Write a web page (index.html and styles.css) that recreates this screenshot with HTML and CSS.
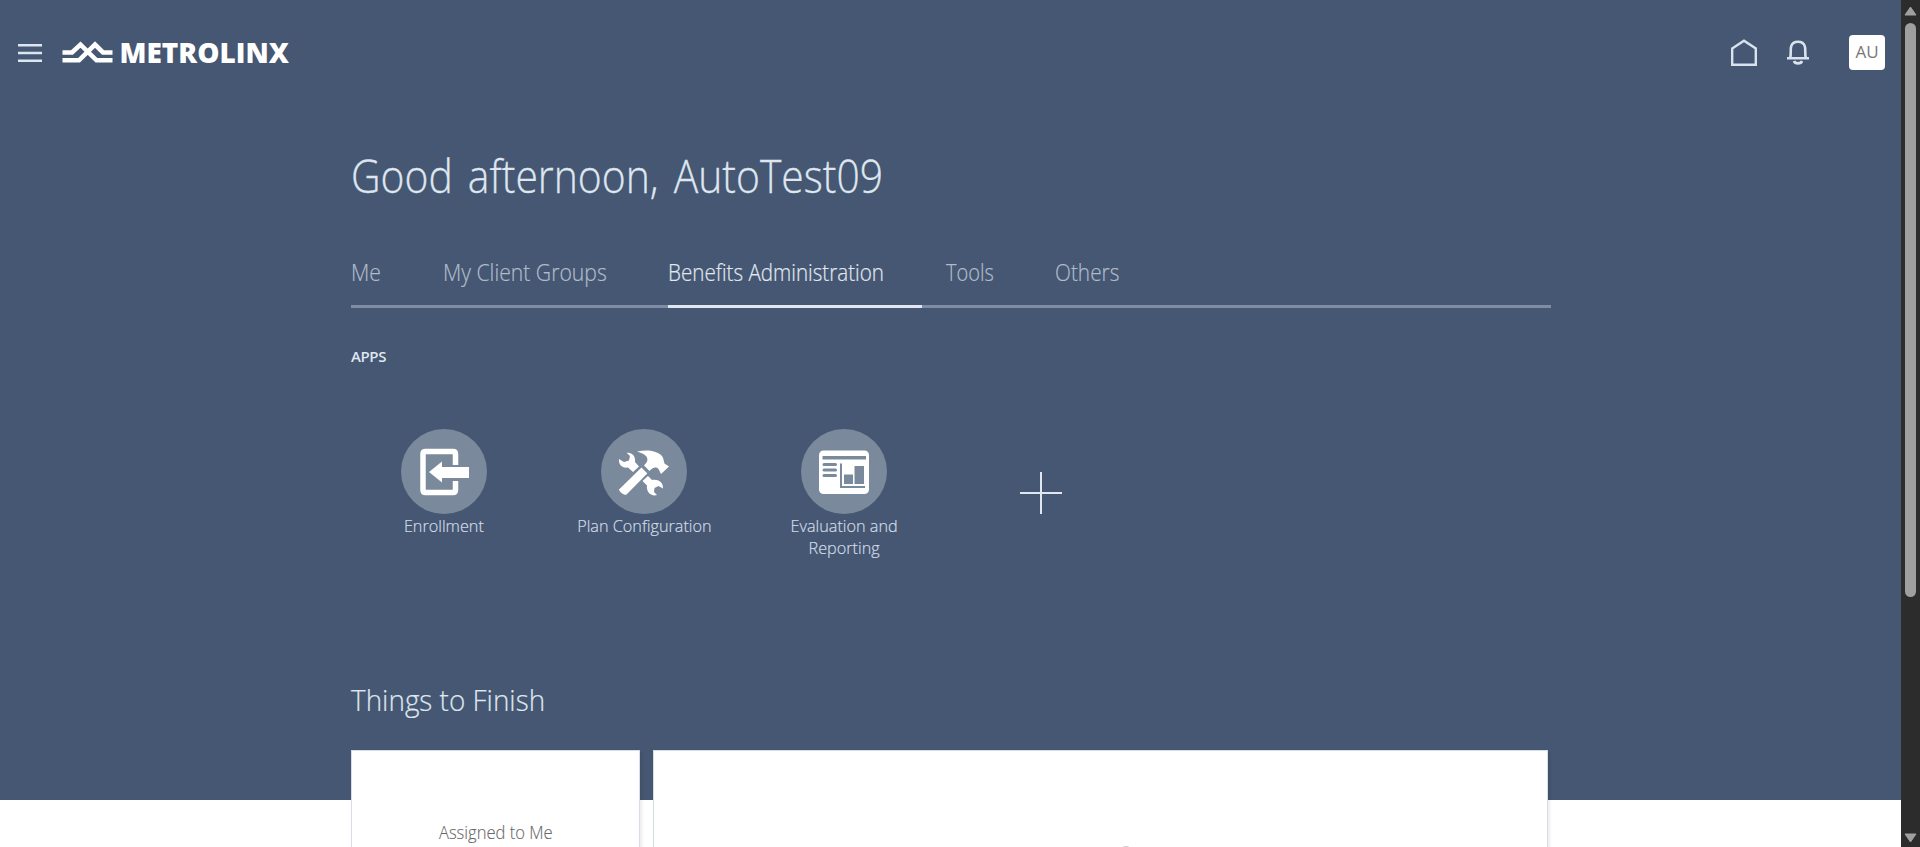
FILE: index.html
```html
<!DOCTYPE html>
<html lang="en">
<head>
<meta charset="utf-8">
<title>Metrolinx</title>
<link rel="stylesheet" href="styles.css">
</head>
<body>
<div class="window">
  <div class="page">
    <header class="topbar">
      <svg class="menu" width="24" height="18" viewBox="0 0 24 18"><path d="M0 1.3h24M0 9h24M0 16.7h24"/></svg>
      <svg class="logo" width="240" height="40" viewBox="0 -8 240 40">
        <path class="logo-mark" d="M0.500 11.500H10L18.500 3.600L34.500 19.300H50.500M0.500 19.300H17L33 3.600L41 11.500H50.500"/>
        <text class="logo-text" x="57.500" y="21.800" textLength="169.500" lengthAdjust="spacingAndGlyphs">METROLINX</text>
      </svg>
      <nav class="actions">
        <svg class="icon home" width="26" height="28" viewBox="0 0 26 28"><path d="M1.200 9.500L13 1.700L24.800 9.500V25.800H1.200Z"/></svg>
        <svg class="icon bell" width="22" height="26" viewBox="0 0 22 26"><path d="M0 18.200H22M3.200 18C4.300 14 3.200 9 4.200 6.200C5.200 3 7.800 1.700 11 1.700S16.800 3 17.800 6.200C18.800 9 17.700 14 18.800 18M7 21C8 24.200 14 24.200 15 21"/></svg>
        <span class="avatar">AU</span>
      </nav>
    </header>
    <main class="content">
      <h1 class="greeting"><span>Good afternoon, AutoTest09</span></h1>
      <nav class="tabs">
        <a class="tab tab-me"><span>Me</span></a>
        <a class="tab tab-groups"><span>My Client Groups</span></a>
        <a class="tab tab-benefits active"><span>Benefits Administration</span></a>
        <a class="tab tab-tools"><span>Tools</span></a>
        <a class="tab tab-others"><span>Others</span></a>
      </nav>
      <h2 class="section-label">APPS</h2>
      <div class="apps">
        <a class="app">
          <svg class="app-icon" width="86" height="86" viewBox="0 0 86 86">
            <ellipse class="disc" cx="43" cy="42.500" rx="43" ry="42.500"/>
            <path class="line" d="M54.500 36V25Q54.500 22.500 52 22.500H24.500Q22 22.500 22 25V61Q22 63.500 24.500 63.500H52Q54.500 63.500 54.500 61V52"/>
            <path class="fill" d="M28 43L41 32.500V38H68V49H41V53.500Z"/>
          </svg>
          <span class="app-name">Enrollment</span>
        </a>
        <a class="app">
          <svg class="app-icon" width="86" height="86" viewBox="0 0 86 86">
            <ellipse class="disc" cx="43" cy="42.500" rx="43" ry="42.500"/>
            <path class="fill" d="M18 30C17.300 35.500 21.300 39.500 27 38.500L32 43L38 37.500L34 33C35 27.500 31 22.800 25.500 23.800L29 27L28 31.500L23 33Z"/>
            <path class="fill" d="M36 22.500C45 20.500 55 21 60.500 26.500C63 29 62.500 32 63.500 34.500L68 37.500L60 45L57.500 40C54.500 37 51.500 39 48.500 42L43 36.500C46 33 47.500 31.500 45.500 27.500C43 24.500 40 24 36 22.500Z"/>
            <path class="fill" d="M40.500 38.500L46.300 44.500L25.500 65.500C24 67 18 63 18 60.500Z"/>
            <path class="fill" d="M41.500 52L47 47L51 51C57 50 62.500 53 62 59.500L57.500 57L53.500 59L53 63L56 66C50 68 45 62.500 46 56.500Z"/>
          </svg>
          <span class="app-name">Plan Configuration</span>
        </a>
        <a class="app">
          <svg class="app-icon" width="86" height="86" viewBox="0 0 86 86">
            <ellipse class="disc" cx="43" cy="42.500" rx="43" ry="42.500"/>
            <rect class="fill" x="18" y="21.500" width="50" height="43.500" rx="4.500"/>
            <path class="cut" d="M21.500 27H65V30.500H21.500ZM43 45.500H52V55H43ZM53.500 37H63V55H53.500Z"/>
            <path class="cut-line" d="M23 35.500H34.500M23 41H34.500M23 46.500H34.500"/>
            <path class="axis" d="M40 34.500V58H64"/>
          </svg>
          <span class="app-name">Evaluation and<br>Reporting</span>
        </a>
        <a class="app add"><svg width="42" height="42" viewBox="0 0 42 42"><path d="M21 0V42M0 21H42"/></svg></a>
      </div>
      <h2 class="finish-title"><span>Things to Finish</span></h2>
      <div class="cards">
        <section class="card assigned"><span>Assigned to Me</span></section>
        <section class="card chart"><svg width="14" height="14" viewBox="0 0 14 14"><circle cx="7" cy="7" r="6.500"/></svg></section>
      </div>
    </main>
  </div>
  <aside class="scrollbar">
    <svg width="13" height="10" viewBox="0 0 13 10"><path d="M6.500 1L12 9H1Z"/></svg>
    <div class="thumb"></div>
    <svg class="down" width="13" height="10" viewBox="0 0 13 10"><path d="M6.500 9L12 1H1Z"/></svg>
  </aside>
</div>
</body>
</html>
```
FILE: styles.css
```css
* { box-sizing: border-box; }
body { margin: 0; font-family: "Open Sans", "Noto Sans", sans-serif; font-weight: 300; color: #dfe6ef; }
.window { display: flex; width: 1920px; height: 847px; overflow: hidden; }
.page { flex: 1; height: 847px; overflow: hidden; background: linear-gradient(#455772 800px, #fff 800px); }

.topbar { display: flex; align-items: center; height: 106px; padding: 0 16px 0 18px; }
.menu { fill: none; stroke: #dde5ef; stroke-width: 2.500; }
.logo { margin-left: 20px; }
.logo-mark { fill: none; stroke: #fff; stroke-width: 4.600; }
.logo-text { font-weight: 800; font-size: 27.500px; fill: #fff; }
.actions { display: flex; align-items: center; margin-left: auto; }
.icon { fill: none; stroke: #d9e2ee; stroke-width: 2.400; }
.bell { margin-left: 30px; stroke-width: 2.600; }
.avatar { width: 36px; height: 35px; margin: -1px 0 0 40px; border-radius: 4px; background: #fff; color: #777; font-size: 17px; font-weight: 400; line-height: 34px; text-align: center; }

/* Light text is set slightly condensed. */
.greeting span, .tab span, .finish-title span, .assigned span { display: inline-block; transform: scaleX(.92); transform-origin: left; }

.content { width: 1200px; margin-left: 351px; }
.greeting { height: 138px; margin: 0; padding-top: 37px; font-size: 46px; font-weight: 300; line-height: 64px; white-space: nowrap; word-spacing: 5px; }
.greeting span { transform: scaleX(.888); -webkit-text-stroke: .300px; }
.tabs { display: flex; height: 64px; border-bottom: 3px solid #7f8da4; }
.tab { height: 64px; padding-top: 9px; font-size: 23px; line-height: 38px; color: #b0bccb; white-space: nowrap; -webkit-text-stroke: .200px; }
.tab-benefits span { transform: scaleX(.896); }
.tab-tools span { transform: scaleX(.87); }
.tab-others span { transform: scaleX(.905); }
.tab-me { width: 92px; }
.tab-groups { width: 225px; }
.tab-benefits { width: 254px; margin-right: 24px; border-bottom: 3px solid #dfe6f1; }
.tab-tools { width: 109px; }
.active { color: #e0e8f1; }
.section-label { height: 66px; margin: 0; padding-top: 36px; font-size: 15px; font-weight: 600; line-height: 24px; letter-spacing: -.400px; }
.apps { display: flex; height: 290px; padding: 55px 0 0; margin-left: -7px; }
.app { display: flex; flex-direction: column; align-items: center; width: 200px; }
.app-icon { flex: none; }
.disc { fill: #7b899c; }
.fill { fill: #fff; }
.line { fill: none; stroke: #fff; stroke-width: 5.500; }
.cut { fill: #7b899c; }
.cut-line { fill: none; stroke: #7b899c; stroke-width: 3; stroke-linecap: round; }
.axis { fill: none; stroke: #7b899c; stroke-width: 2; }
.app-name { font-size: 17px; line-height: 22px; text-align: center; color: #d3dce8; transform: scaleX(.955); -webkit-text-stroke: .200px; }
.add { width: 194px; padding-top: 43px; }
.add path { fill: none; stroke: #e0e7f0; stroke-width: 2; }
.finish-title { height: 86px; margin: 0; padding-top: 16px; font-size: 30px; font-weight: 300; line-height: 40px; white-space: nowrap; }
.finish-title span { transform: scaleX(.93); -webkit-text-stroke: .200px; }
.cards { display: flex; gap: 13px; }
.card { height: 180px; background: #fff; border: 1px solid #d5dde5; box-shadow: 2px 2px 3px rgba(0,0,0,.08); }
.assigned { width: 289px; padding-top: 67px; text-align: center; font-size: 18px; line-height: 28px; color: #666; }
.assigned span { transform-origin: center; -webkit-text-stroke: .100px; }
.chart { width: 895px; padding: 95px 0 0 465px; }
.chart svg { display: block; }
.chart circle { fill: none; stroke: #ccc; }

.scrollbar { display: flex; flex-direction: column; align-items: center; width: 19px; height: 847px; padding: 6px 0 4px; background: #2c2c2c; }
.scrollbar path { fill: #9f9f9f; stroke: #9f9f9f; stroke-linejoin: round; }
.thumb { width: 11px; height: 574px; margin-top: 7px; border-radius: 6px; background: #9f9f9f; }
.down { margin-top: auto; }
```
